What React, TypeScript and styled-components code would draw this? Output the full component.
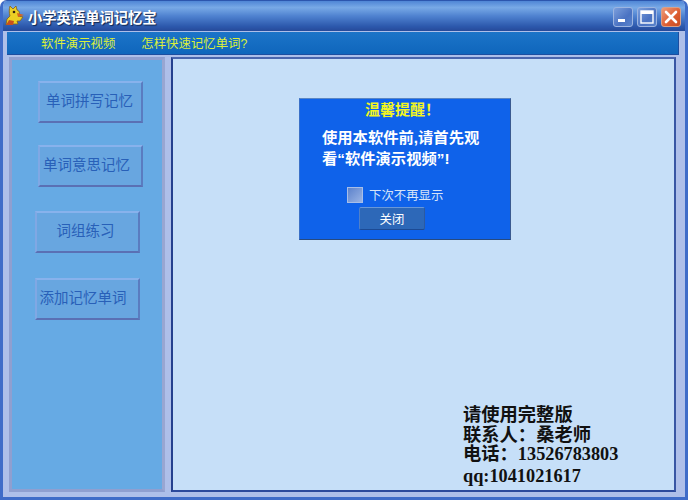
import styled, { createGlobalStyle } from "styled-components";

const GlobalStyle = createGlobalStyle`
  html, body {
    margin: 0;
    padding: 0;
    background: #fff;
  }
  body {
    font-family: "Liberation Sans", "Noto Sans CJK SC", sans-serif;
  }
`;

const Duck = () => (
  <svg width="20" height="22" viewBox="0 0 20 22">
    <path d="M5 1 L8 4 L11 1 L12 5 C15 6 15 9 13 11 L18 12 L15 16 L12 16 L13 19 L7 19 L6 17 L1 20 L2 14 L5 11 C4 8 4 4 5 1 Z" fill="#eccf24" stroke="#84601c" strokeWidth="0.8" />
    <path d="M12 8 L19 10 L13 12 Z" fill="#d8641c" />
    <circle cx="9" cy="7" r="1.3" fill="#302010" />
    <path d="M1 20 L4 15 L9 16 L8 20 Z" fill="#c8501c" />
  </svg>
);

const Window = styled.div`
  width: 688px;
  height: 500px;
  box-sizing: border-box;
  display: flex;
  flex-direction: column;
  border-radius: 7px 7px 0 0;
  overflow: hidden;
  background: #aebfe9;
  border: 3px solid #3f6cc8;
  border-top: 1px solid #2c56ae;
`;

const TitleBar = styled.div`
  height: 30px;
  flex: none;
  display: flex;
  align-items: center;
  padding: 0 4px 0 2px;
  background: linear-gradient(#4f86d6 0%, #78a9e6 22%, #4f82d0 50%, #2c58ac 85%, #264a9a 100%);
`;

const TitleText = styled.div`
  margin-left: 3px;
  color: #fff;
  font-size: 14.3px;
  font-weight: 700;
  text-shadow: 1px 1px 1px #10264f;
  flex: 1;
`;

const WinButton = styled.div<{ $close?: boolean }>`
  width: 20px;
  height: 20px;
  box-sizing: border-box;
  margin-left: 4px;
  margin-top: 1px;
  border-radius: 3px;
  display: flex;
  align-items: center;
  justify-content: center;
  border: 1px solid ${(p) => (p.$close ? "#d8a088" : "#9cb4e0")};
  background: ${(p) =>
    p.$close
      ? "linear-gradient(135deg, #ee9a78, #dc5c30 60%, #c84c20)"
      : "linear-gradient(135deg, #7c9fdc, #4a72c2 60%, #5a84cc)"};
`;

const MenuBar = styled.div`
  height: 22px;
  flex: none;
  margin: 1px 6px 0 4px;
  padding-left: 34px;
  display: flex;
  align-items: center;
  gap: 26px;
  background: linear-gradient(#1c74c8, #0f66bc);
  border-bottom: 1px solid #1c4ea0;
  border-right: 1px solid #1c4ea0;
`;

const MenuLink = styled.span`
  color: #dcef3a;
  font-size: 12.4px;
`;

const Body = styled.div`
  flex: 1;
  display: flex;
  min-height: 0;
  padding: 2px 9px 5px 6px;
  gap: 6px;
`;

const Sidebar = styled.div`
  width: 156px;
  flex: none;
  box-sizing: border-box;
  display: flex;
  flex-direction: column;
  padding-top: 21px;
  background: #66aae4;
  border: 3px solid #8f9fd0;
  border-right-color: #98a6d2;
`;

const SideButton = styled.div<{ $indent: number; $gap: number; $shift: number }>`
  width: 105px;
  height: 42px;
  box-sizing: border-box;
  margin-left: ${(p) => p.$indent}px;
  margin-bottom: ${(p) => p.$gap}px;
  padding: 0 ${(p) => p.$shift}px 5px 0;
  display: flex;
  align-items: center;
  justify-content: center;
  white-space: nowrap;
  color: #2860b8;
  font-size: 14.5px;
  background: #68a6e0;
  border: 2px solid;
  border-color: #88b2ec #5a7cc0 #5a70b4 #80a8e4;
`;

const Content = styled.div`
  flex: 1;
  box-sizing: border-box;
  display: flex;
  flex-direction: column;
  background: #c6dff8;
  border: 2px solid #24408e;
  border-top-color: #4a66ae;
  border-right-color: #3856a4;
  border-bottom-color: #2c4a9c;
`;

const Dialog = styled.div`
  width: 212px;
  height: 142px;
  box-sizing: border-box;
  margin: 39px 0 0 126px;
  display: flex;
  flex-direction: column;
  background: #0f62ea;
  border: 1px solid;
  border-color: #5a86c4 #3a5a90 #274a80 #3a70c8;
`;

const DialogTitle = styled.div`
  padding-left: 65px;
  height: 22px;
  line-height: 21px;
  color: #f2f522;
  font-size: 15px;
  font-weight: 700;
  white-space: nowrap;
`;

const DialogMessage = styled.div`
  margin: 6px 22px 0 22px;
  color: #fff;
  font-size: 15.3px;
  font-weight: 700;
  line-height: 21px;
  white-space: nowrap;
`;

const CheckRow = styled.div`
  margin: 17px 0 0 47px;
  display: flex;
  align-items: center;
  gap: 6px;
  color: #d6e4f8;
  font-size: 12.4px;
  height: 18px;
`;

const CheckBox = styled.div`
  width: 14px;
  height: 14px;
  background: linear-gradient(135deg, #5c82cc, #9ab4e4);
  border: 1px solid #a8bee8;
`;

const CloseButton = styled.div`
  width: 66px;
  height: 23px;
  margin: 3px 0 0 59px;
  box-sizing: border-box;
  display: flex;
  align-items: center;
  justify-content: center;
  color: #fff;
  font-size: 12.4px;
  background: #2d68b8;
  border: 1px solid;
  border-color: #6a98d8 #2c5aa0 #1c4a94 #5080c8;
  border-radius: 2px;
`;

const Contact = styled.div`
  margin: auto 0 3px 290px;
  color: #111;
  font-family: "Liberation Serif", "Noto Sans CJK SC", serif;
  font-size: 18.3px;
  font-weight: 700;
  line-height: 19.8px;
  white-space: nowrap;
`;

const ContactLine = styled.div<{ $gap?: number }>`
  margin-top: ${(p) => p.$gap ?? 0}px;
`;

const sideItems = [
  { label: "单词拼写记忆", indent: 26, gap: 22, shift: 2 },
  { label: "单词意思记忆", indent: 26, gap: 24, shift: 8 },
  { label: "词组练习", indent: 23, gap: 25, shift: 4 },
  { label: "添加记忆单词", indent: 23, gap: 0, shift: 9 },
];

export default function App() {
  return (
    <>
      <GlobalStyle />
      <Window>
        <TitleBar>
          <Duck />
          <TitleText>小学英语单词记忆宝</TitleText>
          <WinButton>
            <svg width="14" height="14" viewBox="0 0 14 14">
              <rect x="2" y="9" width="7" height="3" fill="#fff" />
            </svg>
          </WinButton>
          <WinButton>
            <svg width="16" height="16" viewBox="0 0 16 16">
              <rect x="2" y="2" width="12" height="12" fill="none" stroke="#fff" strokeWidth="1.4" />
              <rect x="2" y="2" width="12" height="3" fill="#fff" />
            </svg>
          </WinButton>
          <WinButton $close>
            <svg width="16" height="16" viewBox="0 0 16 16">
              <path d="M3 3 L13 13 M13 3 L3 13" stroke="#fff" strokeWidth="2.6" strokeLinecap="round" />
            </svg>
          </WinButton>
        </TitleBar>
        <MenuBar>
          <MenuLink>软件演示视频</MenuLink>
          <MenuLink>怎样快速记忆单词?</MenuLink>
        </MenuBar>
        <Body>
          <Sidebar>
            {sideItems.map((item) => (
              <SideButton key={item.label} $indent={item.indent} $gap={item.gap} $shift={item.shift}>
                {item.label}
              </SideButton>
            ))}
          </Sidebar>
          <Content>
            <Dialog>
              <DialogTitle>温馨提醒{"\uFF01"}</DialogTitle>
              <DialogMessage>
                使用本软件前,请首先观
                <br />
                看“软件演示视频”!
              </DialogMessage>
              <CheckRow>
                <CheckBox />
                下次不再显示
              </CheckRow>
              <CloseButton>关闭</CloseButton>
            </Dialog>
            <Contact>
              <ContactLine>请使用完整版</ContactLine>
              <ContactLine>联系人{"\uFF1A"}桑老师</ContactLine>
              <ContactLine>电话{"\uFF1A"}13526783803</ContactLine>
              <ContactLine $gap={2}>qq:1041021617</ContactLine>
            </Contact>
          </Content>
        </Body>
      </Window>
    </>
  );
}
